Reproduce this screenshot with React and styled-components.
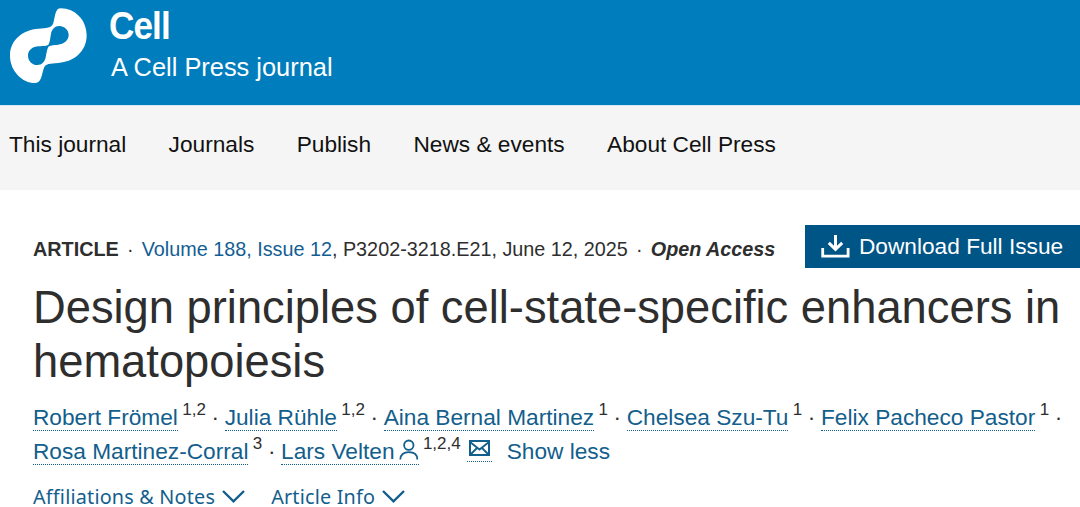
import React from "react";
import styled, { createGlobalStyle } from "styled-components";

const GlobalStyle = createGlobalStyle`
  * {
    box-sizing: border-box;
  }

  body {
    margin: 0;
    background: #ffffff;
    color: #2e2e2e;
    font-family: "Liberation Sans", Arial, sans-serif;
  }
`;

const Page = styled.div`
  width: 1080px;
  height: 507px;
`;

const Header = styled.header`
  display: flex;
  height: 105px;
  padding: 8px 0 0 10px;
  background: #007dbc;
  color: #ffffff;

  .header {
    &__logo {
      width: 77px;
      height: 76px;
    }

    &__brand {
      margin-left: 22px;
    }

    &__name {
      margin: 0;
      font-size: 39px;
      line-height: 35px;
      font-weight: bold;
      letter-spacing: -1px;
      transform: scaleX(0.9);
      transform-origin: left;
    }

    &__tagline {
      margin: 9px 0 0 2px;
      font-size: 25.4px;
      line-height: 30px;
    }
  }
`;

const Nav = styled.nav`
  display: flex;
  gap: 42.4px;
  height: 85px;
  padding: 25px 0 0 9px;
  border-top: 1px solid #d5e8f3;
  background: #f5f5f5;
`;

const NavLink = styled.a`
  color: #111111;
  font-size: 22.68px;
  line-height: 26px;
  white-space: nowrap;
`;

const Article = styled.main`
  padding: 35px 0 0 33px;
`;

const MetaRow = styled.div`
  display: flex;
  justify-content: space-between;
`;

const Meta = styled.div`
  padding-top: 12px;
  font-size: 19.8px;
  line-height: 24px;
  white-space: nowrap;
`;

const MetaLink = styled.a`
  color: #125e93;
`;

const Dot = styled.span`
  margin: 0 ${props => props.$space}px;
`;

const DownloadButton = styled.a`
  display: flex;
  width: 275px;
  height: 43px;
  padding-left: 16px;
  background: #005587;
  color: #ffffff;
  font-size: 22.68px;
  line-height: 42px;
  white-space: nowrap;

  svg {
    margin: 9px 8px 0 0;
  }
`;

const Title = styled.h1`
  margin: 13px 0 0;
  font-size: 45.3px;
  line-height: 54.4px;
  font-weight: normal;
  white-space: nowrap;
`;

const Authors = styled.div`
  margin-top: 14px;
`;

const AuthorLine = styled.div`
  display: flex;
  height: 34px;
  font-size: 22.68px;
  line-height: 26px;
  white-space: nowrap;
`;

const AuthorLink = styled.a`
  display: flex;
  height: 27px;
  border-bottom: 1px dotted #125e8c;
  color: #125e8c;
`;

const Sup = styled.span`
  margin-left: 4.4px;
  font-size: 17px;
  line-height: 12px;
`;

const MailLink = styled.a`
  display: flex;
  height: 24px;
  margin-left: 6px;
  padding: 2px 2px 0;
  border-bottom: 1px dotted #125e8c;
`;

const ShowLess = styled.a`
  margin-left: 15px;
  color: #125e8c;
`;

const Toggles = styled.div`
  display: flex;
  gap: 26px;
  margin-top: 16px;
`;

const Toggle = styled.a`
  display: flex;
  align-items: center;
  gap: 7px;
  color: #125e8c;
  font-family: "Noto Sans", sans-serif;
  font-size: 19.8px;
  line-height: 18px;
  letter-spacing: 0.2px;
  white-space: nowrap;
`;

const navItems = [
  "This journal",
  "Journals",
  "Publish",
  "News & events",
  "About Cell Press",
];

const authors = [
  { name: "Robert Frömel", notes: "1,2" },
  { name: "Julia Rühle", notes: "1,2" },
  { name: "Aina Bernal Martinez", notes: "1" },
  { name: "Chelsea Szu-Tu", notes: "1" },
  { name: "Felix Pacheco Pastor", notes: "1" },
];

const Logo = () => (
  <svg className="header__logo" viewBox="30 24 231 228">
    <path
      fill="#fff"
      fillRule="evenodd"
      d="M182 25C226 25 260 61 260 106C260 154 222 186 175 189C150 191 136 190 131 206C125 224 124 249 104 249C68 249 30 214 30 167C30 119 69 89 115 86C140 85 155 84 160 69C166 49 165 25 182 25Z
      M178 78C164 78 156 88 153 101C151 112 150 125 146 133C142 139 130 138 116 139C98 140 84 150 84 167C84 183 97 195 112 195C126 195 134 186 137 172C139 161 141 148 145 141C148 135 160 136 174 134C191 132 206 122 206 105C206 90 193 78 178 78Z"
    />
  </svg>
);

const DownloadIcon = () => (
  <svg width="30" height="26" viewBox="0 0 30 26" fill="none" stroke="#fff">
    <path strokeWidth="2.8" d="M1.7 14v8.1h25.4V14" />
    <path strokeWidth="3" d="M14.5 1v14M7.8 8.8l6.7 6.5 6.7-6.5" />
  </svg>
);

const PersonIcon = () => (
  <svg width="24" height="25" viewBox="0 0 24 25" fill="none" stroke="#125e8c">
    <circle cx="13.8" cy="7.2" r="4.7" strokeWidth="1.8" />
    <path strokeWidth="1.8" d="M5.3 21.5c0-5 3.4-7.3 8.5-7.3s8.5 2.3 8.5 7.3" />
  </svg>
);

const MailIcon = () => (
  <svg width="21" height="16" viewBox="0 0 21 16" fill="none" stroke="#125e8c">
    <path strokeWidth="2" d="M1 1h19v14H1z" />
    <path strokeWidth="1.8" d="M1 2l9.5 7.5L20 2M1.5 14.5l6.5-6.5M19.5 14.5L13 8" />
  </svg>
);

const Chevron = () => (
  <svg width="23" height="13" viewBox="0 0 23 13" fill="none" stroke="#125e8c">
    <path strokeWidth="2.4" d="M1 1l10.5 10.3L22 1" />
  </svg>
);

const Author = ({ name, notes, children }) => (
  <>
    <AuthorLink>
      {name}
      {children}
    </AuthorLink>
    <Sup>{notes}</Sup>
  </>
);

const App = () => {
  return (
    <Page>
      <GlobalStyle />
      <Header>
        <Logo />
        <div className="header__brand">
          <p className="header__name">Cell</p>
          <p className="header__tagline">A Cell Press journal</p>
        </div>
      </Header>
      <Nav>
        {navItems.map(item => (
          <NavLink key={item}>{item}</NavLink>
        ))}
      </Nav>
      <Article>
        <MetaRow>
          <Meta>
            <b>ARTICLE</b>
            <Dot $space={8.2}>·</Dot>
            <MetaLink>Volume 188, Issue 12</MetaLink>, P3202-3218.E21, June 12,
            2025
            <Dot $space={8.2}>·</Dot>
            <b>
              <i>Open Access</i>
            </b>
          </Meta>
          <DownloadButton>
            <DownloadIcon />
            Download Full Issue
          </DownloadButton>
        </MetaRow>
        <Title>
          Design principles of cell-state-specific enhancers in
          <br />
          hematopoiesis
        </Title>
        <Authors>
          <AuthorLine>
            {authors.map(author => (
              <React.Fragment key={author.name}>
                <Author {...author} />
                <Dot $space={5.6}>·</Dot>
              </React.Fragment>
            ))}
          </AuthorLine>
          <AuthorLine>
            <Author name="Rosa Martinez-Corral" notes="3" />
            <Dot $space={5.6}>·</Dot>
            <Author name="Lars Velten" notes="1,2,4">
              <PersonIcon />
            </Author>
            <MailLink>
              <MailIcon />
            </MailLink>
            <ShowLess>Show less</ShowLess>
          </AuthorLine>
        </Authors>
        <Toggles>
          <Toggle>
            Affiliations &amp; Notes
            <Chevron />
          </Toggle>
          <Toggle>
            Article Info
            <Chevron />
          </Toggle>
        </Toggles>
      </Article>
    </Page>
  );
};

export default App;
